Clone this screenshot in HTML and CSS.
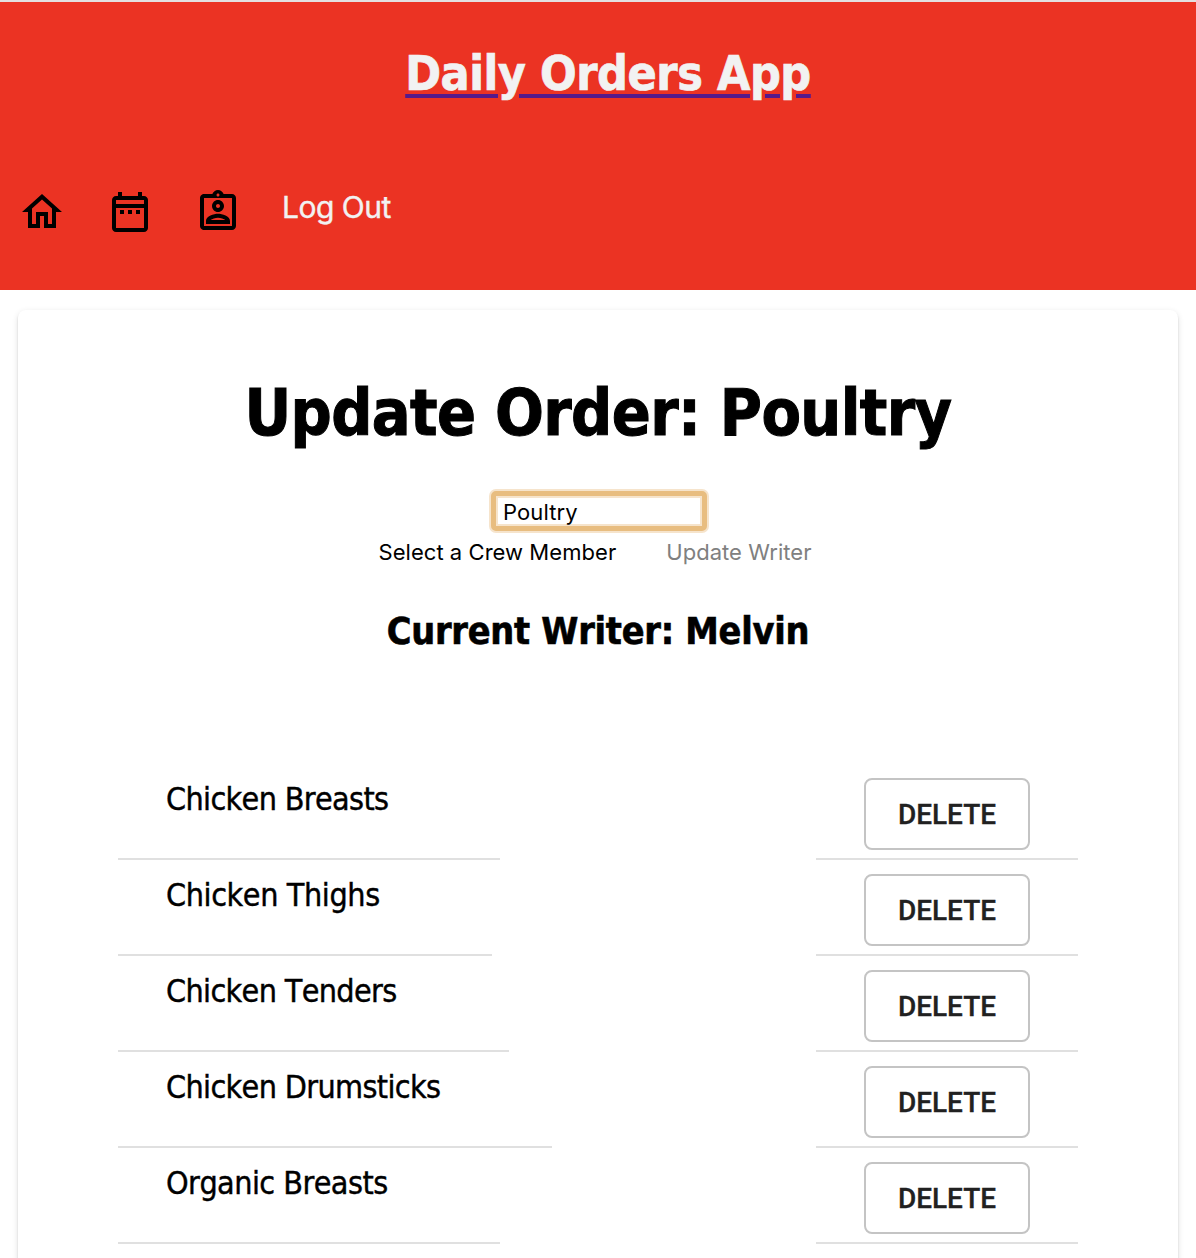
FILE: index.html
```html
<!DOCTYPE html>
<html lang="en">
<head>
<meta charset="utf-8">
<title>Daily Orders App</title>
<link rel="stylesheet" href="styles.css">
</head>
<body>
<header class="header">
  <a class="brand" href="#"><h1 class="brand-title">Daily Orders App</h1></a>
  <nav class="nav">
    <svg class="icon" viewBox="0 0 24 24"><path d="M12 5.69l5 4.5V18h-2v-6H9v6H7v-7.81l5-4.5M12 3L2 12h3v8h6v-6h2v6h6v-8h3L12 3z"/></svg>
    <svg class="icon" viewBox="0 0 24 24"><path d="M7 11h2v2H7v-2zm14-5v14c0 1.1-.9 2-2 2H5c-1.11 0-2-.9-2-2l.01-14c0-1.1.88-2 1.99-2h1V2h2v2h8V2h2v2h1c1.1 0 2 .9 2 2zM5 8h14V6H5v2zm14 12V10H5v10h14zm-4-7h2v-2h-2v2zm-4 0h2v-2h-2v2z"/></svg>
    <svg class="icon" viewBox="0 0 24 24"><path d="M19 3h-4.18C14.4 1.84 13.3 1 12 1s-2.4.84-2.82 2H5c-.14 0-.27.01-.4.04-.39.08-.74.28-1.01.55-.18.18-.33.4-.43.64-.1.23-.16.49-.16.77v14c0 .27.06.54.16.78s.25.45.43.64c.27.27.62.47 1.01.55.13.02.26.03.4.03h14c1.1 0 2-.9 2-2V5c0-1.1-.9-2-2-2zm-7-.25c.41 0 .75.34.75.75s-.34.75-.75.75-.75-.34-.75-.75.34-.75.75-.75zM19 19H5V5h14v14zM12 6c-1.65 0-3 1.35-3 3s1.35 3 3 3 3-1.35 3-3-1.35-3-3-3zm0 4c-.55 0-1-.45-1-1s.45-1 1-1 1 .45 1 1-.45 1-1 1zm-6 6.47V18h12v-1.53c0-2.5-3.97-3.58-6-3.58s-6 1.07-6 3.58zM8.31 16c.69-.56 2.38-1.12 3.69-1.12s3.01.56 3.69 1.12H8.31z"/></svg>
    <span class="logout">Log Out</span>
  </nav>
</header>
<main class="card">
  <h1 class="title">Update Order: Poultry</h1>
  <input class="name-input" type="text" value="Poultry">
  <div class="writer-form">
    <span class="select">Select a Crew Member</span>
    <span class="update">Update Writer</span>
  </div>
  <h3 class="writer">Current Writer: Melvin</h3>
  <div class="items">
    <div class="row"><div class="cell name">Chicken Breasts</div><div class="cell action"><button class="delete">DELETE</button></div></div>
    <div class="row"><div class="cell name">Chicken Thighs</div><div class="cell action"><button class="delete">DELETE</button></div></div>
    <div class="row"><div class="cell name">Chicken Tenders</div><div class="cell action"><button class="delete">DELETE</button></div></div>
    <div class="row"><div class="cell name">Chicken Drumsticks</div><div class="cell action"><button class="delete">DELETE</button></div></div>
    <div class="row"><div class="cell name">Organic Breasts</div><div class="cell action"><button class="delete">DELETE</button></div></div>
  </div>
</main>
</body>
</html>
```
FILE: styles.css
```css
* { box-sizing: border-box; }
body {
  margin: 0;
  height: 1258px;
  overflow: hidden;
  background: #fff;
  color: #000;
  font-family: "DejaVu Sans Condensed", "DejaVu Sans", sans-serif;
  font-stretch: condensed;
  font-kerning: none;
}
h1, h3 { margin: 0; }
.header {
  height: 290px;
  padding-top: 42px;
  border-top: 2px solid #e4e0e0;
  background: #eb3323;
}
.brand {
  display: block;
  width: max-content;
  margin: 0 auto;
  padding-left: 20px;
  color: #551a8b;
  text-decoration: none;
}
.brand-title {
  font-size: 48px;
  line-height: 58px;
  letter-spacing: -0.48px;
  color: #f2f2f2;
  text-decoration: underline #551a8b 4px;
  text-underline-offset: 4px;
  -webkit-text-stroke: 0.7px #f2f2f2;
}
.nav {
  display: flex;
  align-items: center;
  gap: 40px;
  margin-top: 86px;
  padding-left: 18px;
}
.icon { width: 48px; height: 48px; }
.logout {
  margin: -10px 0 0;
  font: 30px/40px Inter, sans-serif;
  letter-spacing: -0.5px;
  color: #f2f2f2;
  -webkit-text-stroke: 0.4px #f2f2f2;
}
.card {
  display: flex;
  flex-direction: column;
  align-items: center;
  height: 1000px;
  margin: 20px 18px 0;
  padding-top: 63px;
  border-radius: 8px;
  box-shadow: 0 4px 2px -2px rgba(0,0,0,.2), 0 2px 2px rgba(0,0,0,.14), 0 2px 6px rgba(0,0,0,.12);
}
.title {
  font-size: 64px;
  line-height: 80px;
  letter-spacing: -0.6px;
  -webkit-text-stroke: 1px #000;
}
.name-input {
  width: 216px;
  height: 40px;
  margin: 38px 0 0 2px;
  padding: 2px 7px 0;
  border: 5px solid #e8bd80;
  border-radius: 5px;
  outline: none;
  background: #fff;
  box-shadow: 0 0 0 2px #f6e4cc, inset 0 0 0 2px #f6e4cc;
  font: 22px/26px Inter, sans-serif;
  letter-spacing: 0.1px;
}
.writer-form {
  display: flex;
  gap: 50px;
  margin-top: 7px;
  padding-right: 6px;
  font: 22px/28px Inter, sans-serif;
  letter-spacing: 0.05px;
}
.update { color: #808080; }
.writer {
  margin-top: 41px;
  font-size: 37.44px;
  line-height: 48px;
  letter-spacing: -0.25px;
  -webkit-text-stroke: 0.6px #000;
}
.items {
  width: 960px;
  margin-top: 109px;
}
.row {
  display: flex;
  justify-content: space-between;
  height: 96px;
}
.cell { border-bottom: 2px solid #e0e0e0; }
.name {
  padding: 14px 112px 0 48px;
  font-size: 32px;
  line-height: 43px;
  letter-spacing: -0.65px;
  -webkit-text-stroke: 0.4px #000;
}
.row:nth-child(2) .name { letter-spacing: -0.4px; }
.row:nth-child(5) .name { letter-spacing: -0.55px; }
.action { padding: 14px 48px 0; }
.delete {
  display: block;
  width: 166px;
  height: 72px;
  padding: 0;
  border: 2px solid #c4c4c4;
  border-radius: 8px;
  background: #fff;
  font: 500 28px/49px Roboto, sans-serif;
  color: #212121;
  -webkit-text-stroke: 0.3px #212121;
}
```
